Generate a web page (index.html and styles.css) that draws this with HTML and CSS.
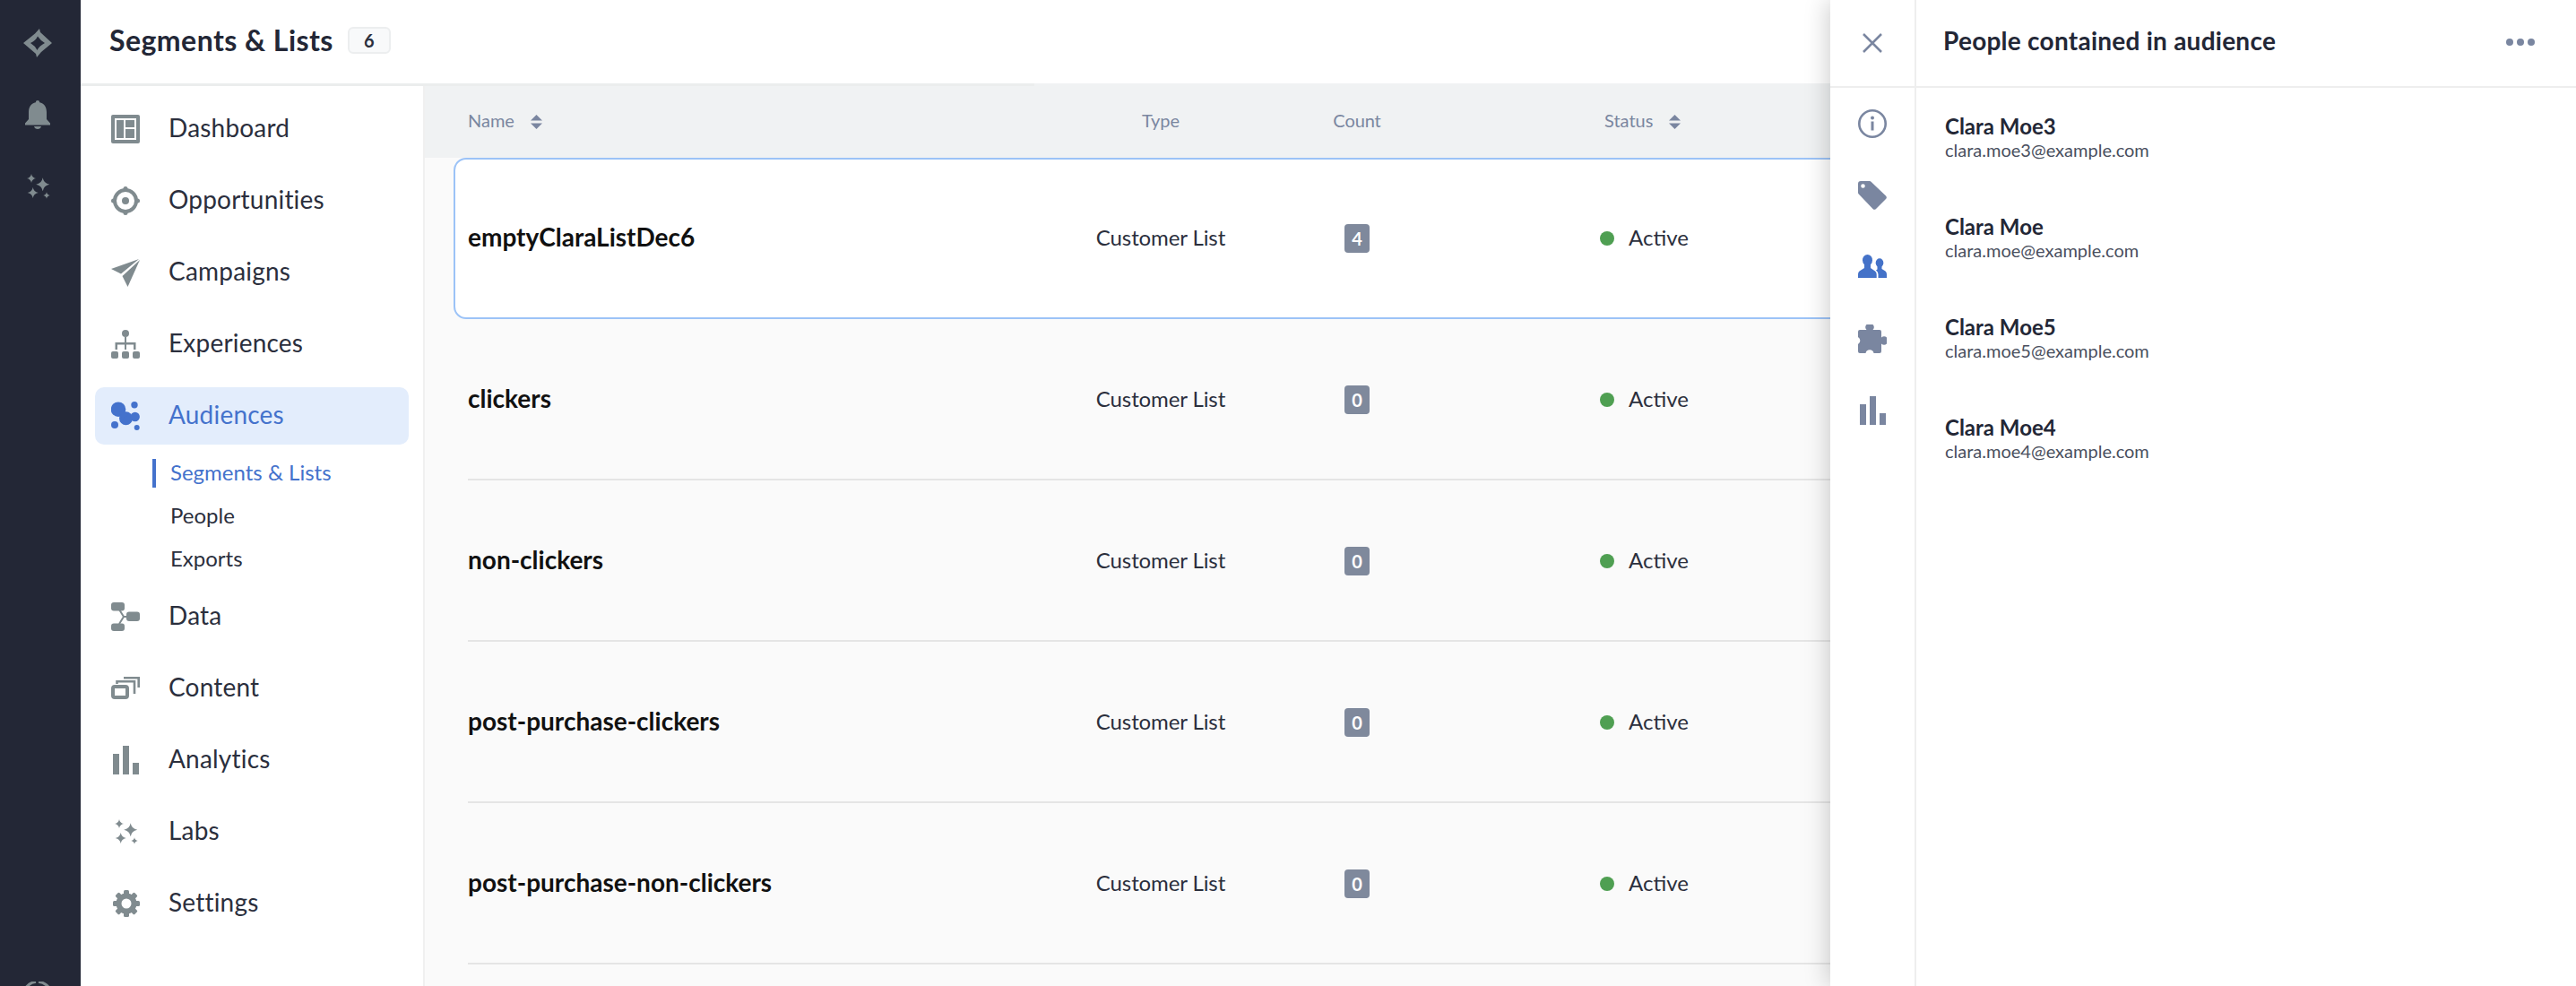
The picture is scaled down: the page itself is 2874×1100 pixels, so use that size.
FILE: index.html
```html
<!DOCTYPE html>
<html>
<head>
  <meta charset="UTF-8">
  <title>Segments &amp; Lists</title>
  <link rel="stylesheet" href="styles.css">
</head>
<body>
  <svg class="defs" width="0" height="0">
    <defs>
      <symbol id="sparkles" viewBox="0 0 32 32">
        <path d="M9 2Q9.8 6.2 14 7Q9.8 7.8 9 12Q8.2 7.8 4 7Q8.2 6.2 9 2Z"/>
        <path d="M21.7 6.2Q22.8 12.6 29.2 13.7Q22.8 14.8 21.7 21.2Q20.6 14.8 14.2 13.7Q20.6 12.6 21.7 6.2Z"/>
        <path d="M10.7 17Q11.6 22.1 16.7 23Q11.6 23.9 10.7 29Q9.8 23.9 4.7 23Q9.8 22.1 10.7 17Z"/>
        <path d="M26 22.3Q26.6 25.4 29.7 26Q26.6 26.6 26 29.7Q25.4 26.6 22.3 26Q25.4 25.4 26 22.3Z"/>
      </symbol>
      <symbol id="bars" viewBox="0 0 32 32">
        <rect x="2" y="9" width="7" height="23"/>
        <rect x="13" y="0" width="7" height="32"/>
        <rect x="24" y="19" width="7" height="13"/>
      </symbol>
      <symbol id="sort" viewBox="0 0 13 16">
        <path d="M6.5 0L13 6.5H0Z"/>
        <path d="M0 9.5H13L6.5 16Z"/>
      </symbol>
    </defs>
  </svg>

  <div class="app">
    <aside class="rail">
      <svg class="icon" viewBox="0 0 32 32"><path fill-rule="evenodd" d="M18 0L19 4L32 16L20 26L15 32L14 28L0 16L13 5.500ZM16 8.500Q14 13 8 16Q13 19 15.500 24Q18 19 24 16Q19 13 16 8.500Z"/></svg>
      <svg class="icon" viewBox="0 0 32 32"><path d="M16 0a2.200 2.200 0 0 1 2.200 2.200C23 3.200 26 7 26 13V21L30 25.500V27.500H2V25.500L6 21V13C6 7 9 3.200 13.800 2.200A2.200 2.200 0 0 1 16 0Z"/><path d="M12 29H20C19.500 31 18 32 16 32C14 32 12.500 31 12 29Z"/></svg>
      <svg class="icon"><use href="#sparkles"/></svg>
      <svg class="icon rail-foot" viewBox="0 0 32 32"><path d="M0 16A16 16 0 0 1 14 .3M17 .3A16 16 0 0 1 31 12" fill="none" stroke="currentColor" stroke-width="3"/></svg>
    </aside>

    <div class="content">
      <header class="topbar">
        <h1>Segments &amp; Lists</h1>
        <span class="total">6</span>
      </header>
      <div class="topbar-edge"><div class="topbar-rule"></div></div>

      <div class="columns">
        <nav class="nav">
          <a class="nav-item">
            <svg class="icon" viewBox="0 0 32 32"><rect width="32" height="32" rx="2"/><rect class="cut" x="4" y="4" width="24" height="24"/><rect x="6" y="6" width="8" height="20"/><rect x="16" y="6" width="10" height="8"/><rect x="16" y="16" width="10" height="10"/></svg>
            <span class="txt">Dashboard</span>
          </a>
          <a class="nav-item">
            <svg class="icon" viewBox="0 0 32 32"><circle cx="16" cy="16" r="12" fill="none" stroke="currentColor" stroke-width="4"/><circle cx="16" cy="16" r="4"/><circle cx="16" cy="2.500" r="2.500"/><circle cx="16" cy="29.500" r="2.500"/><circle cx="2.500" cy="16" r="2.500"/><circle cx="29.500" cy="16" r="2.500"/></svg>
            <span class="txt">Opportunities</span>
          </a>
          <a class="nav-item">
            <svg class="icon" viewBox="0 0 32 32"><path d="M31 1L0 12L11 17.500Z"/><path d="M32 2L12.500 20L18.500 32Z"/></svg>
            <span class="txt">Campaigns</span>
          </a>
          <a class="nav-item">
            <svg class="icon" viewBox="0 0 32 32"><circle cx="16" cy="4" r="4"/><path d="M15 8H17V14H27.500V22H25V16.500H17V22H15V16.500H7V22H4.500V14H15Z"/><rect y="24" width="8" height="8" rx="2"/><rect x="12" y="24" width="8" height="8" rx="2"/><rect x="24" y="24" width="8" height="8" rx="2"/></svg>
            <span class="txt">Experiences</span>
          </a>
          <a class="nav-item active">
            <svg class="icon" viewBox="0 0 32 32"><circle cx="8" cy="8.700" r="8.300"/><circle cx="16.500" cy="18.700" r="7.500"/><path d="M9 11L20 14L12 20Z"/><circle cx="26" cy="3.700" r="3.700"/><circle cx="26.700" cy="17" r="5.200"/><circle cx="4" cy="26" r="4"/><circle cx="28.700" cy="29" r="3"/></svg>
            <span class="txt">Audiences</span>
          </a>
          <ul class="subnav">
            <li><a class="current"><span class="txt">Segments &amp; Lists</span></a></li>
            <li><a><span class="txt">People</span></a></li>
            <li><a><span class="txt">Exports</span></a></li>
          </ul>
          <a class="nav-item">
            <svg class="icon" viewBox="0 0 32 32"><path d="M9 8L14 16L9 24M14 16H20" fill="none" stroke="currentColor" stroke-width="2"/><rect width="15" height="9.500" rx="3"/><rect x="17" y="10.500" width="15" height="10.500" rx="3"/><rect y="23.500" width="15" height="8.500" rx="3"/></svg>
            <span class="txt">Data</span>
          </a>
          <a class="nav-item">
            <svg class="icon" viewBox="0 0 32 32"><rect x="2" y="14" width="16" height="12" rx="2" fill="none" stroke="currentColor" stroke-width="4"/><path d="M6.500 11V8.200H26V22M14 4.200H30.700V15" fill="none" stroke="currentColor" stroke-width="2.600"/></svg>
            <span class="txt">Content</span>
          </a>
          <a class="nav-item">
            <svg class="icon"><use href="#bars"/></svg>
            <span class="txt">Analytics</span>
          </a>
          <a class="nav-item">
            <svg class="icon"><use href="#sparkles"/></svg>
            <span class="txt">Labs</span>
          </a>
          <a class="nav-item">
            <svg class="icon" viewBox="0 0 32 32">
              <circle cx="17" cy="16" r="8.500" fill="none" stroke="currentColor" stroke-width="6"/>
              <rect x="14" y="1" width="6" height="6" rx="1.500"/>
              <rect x="14" y="1" width="6" height="6" rx="1.500" transform="rotate(45 17 16)"/>
              <rect x="14" y="1" width="6" height="6" rx="1.500" transform="rotate(90 17 16)"/>
              <rect x="14" y="1" width="6" height="6" rx="1.500" transform="rotate(135 17 16)"/>
              <rect x="14" y="1" width="6" height="6" rx="1.500" transform="rotate(180 17 16)"/>
              <rect x="14" y="1" width="6" height="6" rx="1.500" transform="rotate(225 17 16)"/>
              <rect x="14" y="1" width="6" height="6" rx="1.500" transform="rotate(270 17 16)"/>
              <rect x="14" y="1" width="6" height="6" rx="1.500" transform="rotate(315 17 16)"/>
            </svg>
            <span class="txt">Settings</span>
          </a>
        </nav>

        <main class="table">
          <div class="table-head">
            <div class="table-grid">
              <span class="th"><span class="txt">Name</span> <svg class="sort"><use href="#sort"/></svg></span>
              <span class="th center"><span class="txt">Type</span></span>
              <span class="th center"><span class="txt">Count</span></span>
              <span class="th status-head"><span class="txt">Status</span> <svg class="sort"><use href="#sort"/></svg></span>
            </div>
          </div>
          <div class="table-grid row selected">
            <span class="name txt">emptyClaraListDec6</span>
            <span class="center"><span class="txt">Customer List</span></span>
            <span class="center"><span class="count">4</span></span>
            <span class="status"><i class="dot"></i><span class="txt">Active</span></span>
          </div>
          <div class="table-grid row">
            <span class="name txt">clickers</span>
            <span class="center"><span class="txt">Customer List</span></span>
            <span class="center"><span class="count">0</span></span>
            <span class="status"><i class="dot"></i><span class="txt">Active</span></span>
          </div>
          <div class="table-grid row">
            <span class="name txt">non-clickers</span>
            <span class="center"><span class="txt">Customer List</span></span>
            <span class="center"><span class="count">0</span></span>
            <span class="status"><i class="dot"></i><span class="txt">Active</span></span>
          </div>
          <div class="table-grid row">
            <span class="name txt">post-purchase-clickers</span>
            <span class="center"><span class="txt">Customer List</span></span>
            <span class="center"><span class="count">0</span></span>
            <span class="status"><i class="dot"></i><span class="txt">Active</span></span>
          </div>
          <div class="table-grid row">
            <span class="name txt">post-purchase-non-clickers</span>
            <span class="center"><span class="txt">Customer List</span></span>
            <span class="center"><span class="count">0</span></span>
            <span class="status"><i class="dot"></i><span class="txt">Active</span></span>
          </div>
        </main>
      </div>
    </div>
  </div>

  <section class="panel">
    <div class="panel-tabs">
      <div class="panel-close">
        <svg class="close" viewBox="0 0 22 22"><path d="M1 1L21 21M21 1L1 21" fill="none" stroke="currentColor" stroke-width="2.500"/></svg>
      </div>
      <div class="tab-list">
        <svg class="icon" viewBox="0 0 32 32"><circle cx="16" cy="16" r="14.700" fill="none" stroke="currentColor" stroke-width="2.600"/><circle cx="16" cy="9.500" r="2"/><rect x="14.500" y="13.500" width="3" height="10"/></svg>
        <svg class="icon" viewBox="0 0 32 32"><path fill-rule="evenodd" d="M3 0H13A2 2 0 0 1 14.500 .7L31 16.500A2.500 2.500 0 0 1 31 20L20 31A2.500 2.500 0 0 1 16.500 31L.7 14.500A2 2 0 0 1 0 13V3A3 3 0 0 1 3 0ZM5.500 3.200A2.300 2.300 0 1 0 5.500 7.800A2.300 2.300 0 1 0 5.500 3.200Z"/></svg>
        <svg class="icon on" viewBox="0 0 32 32"><ellipse cx="10.500" cy="8.300" rx="5.500" ry="6.300"/><path d="M7 13V17L1.500 20.500Q0 21.500 0 24V28H20.700V24Q20.700 21.500 19 20.500L14 17V13Z"/><ellipse cx="24" cy="11.300" rx="4.300" ry="5"/><path d="M21.500 15V18.500L20 19.500Q22.500 21 22.500 24V28H32V24Q32 21.500 30.500 20.500L26.500 18V15Z"/></svg>
        <svg class="icon" viewBox="0 0 32 32"><path d="M2 6H9.500A4.600 4.600 0 1 1 16.500 6H24A2 2 0 0 1 26 8V14.500A4.600 4.600 0 1 1 26 21.500V30A2 2 0 0 1 24 32H17.500A4.600 4.600 0 0 0 8.500 32H2A2 2 0 0 1 0 30V22A4.600 4.600 0 0 0 0 14V8A2 2 0 0 1 2 6Z"/></svg>
        <svg class="icon"><use href="#bars"/></svg>
      </div>
    </div>
    <div class="panel-body">
      <header class="panel-head">
        <h2>People contained in audience</h2>
        <span class="more"><i></i><i></i><i></i></span>
      </header>
      <ul class="people">
        <li><strong>Clara Moe3</strong><span>clara.moe3@example.com</span></li>
        <li><strong>Clara Moe</strong><span>clara.moe@example.com</span></li>
        <li><strong>Clara Moe5</strong><span>clara.moe5@example.com</span></li>
        <li><strong>Clara Moe4</strong><span>clara.moe4@example.com</span></li>
      </ul>
    </div>
  </section>
</body>
</html>
```

FILE: styles.css
```css
* {
  box-sizing: border-box;
}
html, body {
  height: 100%;
}
body {
  margin: 0;
  overflow: hidden;
  background: #fff;
  color: #2b2f3d;
  font-family: Lato, "Open Sans", sans-serif;
}
ul {
  list-style: none;
  margin: 0;
  padding: 0;
}
.defs {
  position: absolute;
}
.icon {
  display: block;
  flex: none;
  width: 32px;
  height: 32px;
  fill: currentColor;
}
.txt {
  padding-bottom: 4px;
}
.app {
  display: flex;
  height: 1100px;
  overflow: hidden;
}

/* dark strip */
.rail {
  flex: none;
  width: 90px;
  display: flex;
  flex-direction: column;
  align-items: center;
  gap: 48px;
  padding: 32px 6px 0 0;
  background: #232736;
  color: #808b8f;
}
.rail-foot {
  margin-top: auto;
  margin-bottom: -27px;
}

.content {
  flex: 1;
  min-width: 0;
  display: flex;
  flex-direction: column;
}
.topbar {
  flex: none;
  height: 93px;
  display: flex;
  align-items: center;
  padding: 0 32px 4px;
  gap: 16px;
}
.topbar h1 {
  margin: 0;
  font-size: 32px;
  font-weight: 700;
  letter-spacing: 0.45px;
  color: #232736;
}
.total {
  width: 48px;
  height: 30px;
  display: flex;
  align-items: center;
  justify-content: center;
  background: #f8f9fa;
  border: 2px solid #eceeef;
  border-radius: 6px;
  font-size: 20px;
  font-weight: 700;
}
.topbar-edge {
  flex: none;
  height: 3px;
  background: #f0f2f3;
}
.topbar-rule {
  width: 1064px;
  height: 3px;
  background: #ebeded;
}
.columns {
  flex: 1;
  min-height: 0;
  display: flex;
}

/* nav */
.nav {
  flex: none;
  width: 384px;
  padding: 16px 16px 0;
  border-right: 2px solid #f0f0f0;
  display: flex;
  flex-direction: column;
  gap: 16px;
}
.nav-item {
  height: 64px;
  display: flex;
  align-items: center;
  gap: 32px;
  padding-left: 18px;
  border-radius: 10px;
  font-size: 28px;
  letter-spacing: 0.2px;
}
.nav-item .icon {
  color: #808b8f;
}
.nav-item .cut {
  fill: #fff;
}
.nav-item.active {
  background: #e3edfc;
  color: #4472cc;
}
.nav-item.active .icon {
  color: #4472cc;
}
.subnav {
  margin: -8px 0;
  padding-left: 64px;
}
.subnav li {
  height: 48px;
  display: flex;
  align-items: center;
}
.subnav a {
  height: 32px;
  display: flex;
  align-items: center;
  padding-left: 20px;
  font-size: 24px;
}
.subnav a.current {
  padding-left: 16px;
  border-left: 4px solid #4472cc;
  color: #4472cc;
}

/* table */
.table {
  flex: 1;
  min-width: 0;
  overflow: hidden;
  background: #fafafa;
}
.table-head {
  height: 80px;
  display: flex;
  align-items: center;
  background: #f0f2f3;
}
.table-grid {
  display: grid;
  grid-template-columns: 678px 190px 248px 1fr;
  align-items: center;
  margin-left: 48px;
  flex: 1;
}
.th {
  display: flex;
  align-items: center;
  font-size: 20px;
  color: #7a86a0;
}
.sort {
  width: 13px;
  height: 16px;
  margin-left: 18px;
  fill: #7a86a0;
}
.center {
  display: flex;
  justify-content: center;
  font-size: 24px;
  letter-spacing: -0.1px;
}
.th.center {
  font-size: 20px;
}
.status-head {
  padding-left: 152px;
}
.row {
  height: 180px;
  border-top: 2px solid transparent;
  border-bottom: 2px solid #e5e5e5;
}
.row.selected {
  margin-left: 32px;
  padding-left: 14px;
  background: #fff;
  border: 2px solid #9cc3f7;
  border-radius: 14px;
}
.name {
  font-size: 28px;
  font-weight: 700;
  color: #111;
}
.count {
  width: 28px;
  height: 32px;
  display: flex;
  align-items: center;
  justify-content: center;
  background: #7f899c;
  border-radius: 4px;
  color: #fff;
  font-size: 20px;
  font-weight: 700;
}
.status {
  display: flex;
  align-items: center;
  padding-left: 147px;
  font-size: 24px;
}
.dot {
  width: 16px;
  height: 16px;
  margin-right: 16px;
  border-radius: 50%;
  background: #4f9f52;
}

/* side panel */
.panel {
  position: absolute;
  top: 0;
  right: 0;
  width: 832px;
  height: 1100px;
  display: flex;
  background: #fff;
  box-shadow: -4px 0 24px rgba(0, 0, 0, 0.18);
}
.panel-tabs {
  flex: none;
  width: 96px;
  border-right: 2px solid #eeeeee;
  color: #7a86a0;
}
.panel-close {
  height: 98px;
  display: flex;
  align-items: center;
  justify-content: center;
  border-bottom: 2px solid #eeeeee;
  margin-right: -2px;
}
.close {
  width: 22px;
  height: 22px;
  margin-right: 2px;
}
.tab-list {
  display: flex;
  flex-direction: column;
  align-items: center;
  gap: 48px;
  padding-top: 24px;
}
.tab-list .on {
  color: #4472c8;
}
.panel-body {
  flex: 1;
}
.panel-head {
  height: 98px;
  display: flex;
  align-items: center;
  justify-content: space-between;
  padding: 0 46px 6px 30px;
  border-bottom: 2px solid #eeeeee;
}
.panel-head h2 {
  margin: 0;
  font-size: 28px;
  font-weight: 700;
  letter-spacing: 0.25px;
  color: #232736;
}
.more {
  display: flex;
  gap: 4px;
  padding-top: 4px;
}
.more i {
  width: 8px;
  height: 8px;
  border-radius: 50%;
  background: #7a86a0;
}
.people {
  padding: 28px 0 0 32px;
}
.people li {
  height: 112px;
  display: flex;
  flex-direction: column;
}
.people strong {
  font-size: 24px;
  line-height: 29px;
  font-weight: 700;
  color: #232736;
}
.people span {
  font-size: 20px;
  line-height: 24px;
  color: #4a4f5e;
}
```
